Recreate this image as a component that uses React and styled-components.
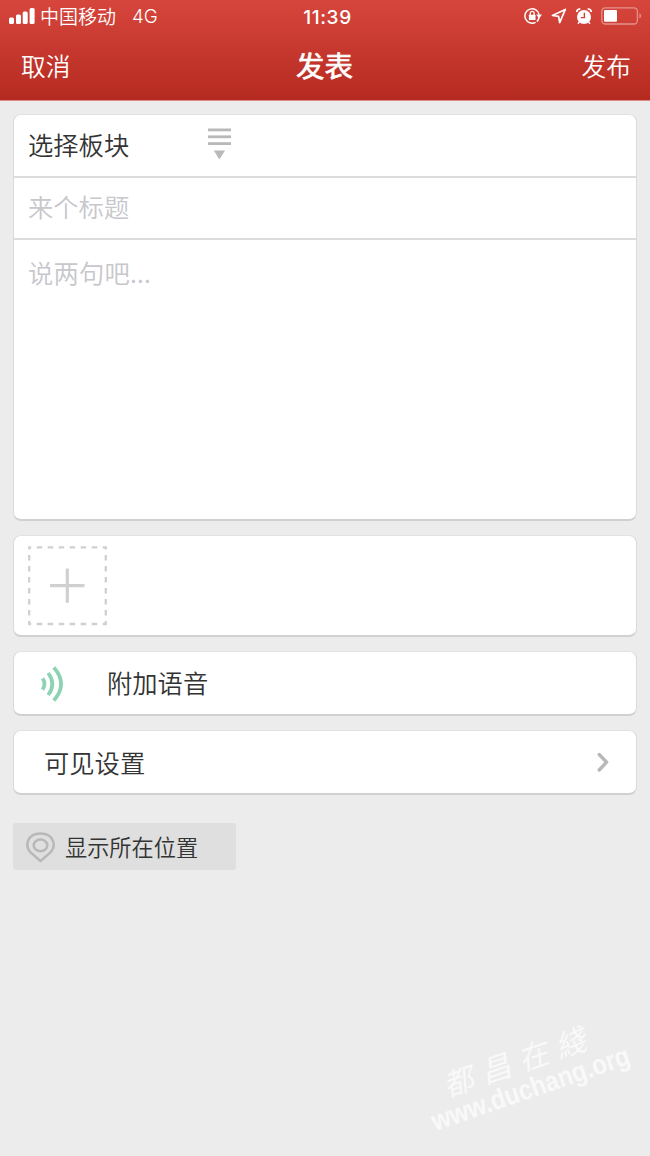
import React from 'react'
import styled, { createGlobalStyle } from 'styled-components'

const App = () => {
    return (
        <Page>
            <GlobalStyle />
            <Header>
                <StatusBar>
                    <Carrier>
                        <SignalIcon />
                        <CarrierName>中国移动</CarrierName>
                        <Network>4G</Network>
                    </Carrier>
                    <Clock>11:39</Clock>
                    <StatusIcons>
                        <RotationLockIcon />
                        <LocationIcon />
                        <AlarmIcon />
                        <BatteryIcon />
                    </StatusIcons>
                </StatusBar>
                <NavBar>
                    <NavButton>取消</NavButton>
                    <NavTitle>发表</NavTitle>
                    <NavButton $right>发布</NavButton>
                </NavBar>
            </Header>

            <Content>
                <Card $height={407}>
                    <BoardRow>
                        <BoardLabel>选择板块</BoardLabel>
                        <DropdownIcon />
                    </BoardRow>
                    <TitleRow>来个标题</TitleRow>
                    <BodyArea>说两句吧...</BodyArea>
                </Card>

                <Card $height={102}>
                    <PhotoArea>
                        <AddPhotoIcon />
                    </PhotoArea>
                </Card>

                <Card $height={65}>
                    <VoiceRow>
                        <SoundIcon />
                        <RowLabel>附加语音</RowLabel>
                    </VoiceRow>
                </Card>

                <Card $height={65}>
                    <SettingRow>
                        <RowLabel>可见设置</RowLabel>
                        <ChevronIcon />
                    </SettingRow>
                </Card>

                <LocationButton>
                    <PinIcon />
                    <LocationText>显示所在位置</LocationText>
                </LocationButton>
            </Content>

            <Watermark>
                <WatermarkName>都昌在綫</WatermarkName>
                <WatermarkUrl>www.duchang.org</WatermarkUrl>
            </Watermark>
        </Page>
    )
}

const SignalIcon = () => (
    <svg width="26" height="18" viewBox="0 0 26 18" fill="#fff">
        <rect x="0" y="10.5" width="5" height="6.5" rx="1.5" />
        <rect x="7" y="7.5" width="5" height="9.5" rx="1.5" />
        <rect x="13.7" y="4.5" width="5" height="12.5" rx="1.5" />
        <rect x="20.6" y="1" width="5" height="16" rx="1.5" />
    </svg>
)

const RotationLockIcon = () => (
    <svg width="18" height="18" viewBox="0 0 18 18">
        <path d="M15.1 9.5 A7.2 7.2 0 0 1 12.8 14.6 M11.6 15.3 A7.2 7.2 0 1 1 15.2 7.6" fill="none" stroke="#fff" strokeWidth="1.5" />
        <path d="M12.1 7.4 H18 L15.1 11.4 Z" fill="#fff" />
        <rect x="4.9" y="7.7" width="6.6" height="5.3" rx="0.5" fill="#fff" />
        <path d="M6.3 8 V6.2 A1.9 1.9 0 0 1 10.1 6.2 V8" fill="none" stroke="#fff" strokeWidth="1.3" />
    </svg>
)

const LocationIcon = () => (
    <svg width="16" height="16" viewBox="0 0 16 16">
        <path d="M14.3 1.4 L1.4 7.5 L7.6 8.4 L8.7 14.6 Z" fill="none" stroke="#fff" strokeWidth="1.7" strokeLinejoin="round" />
    </svg>
)

const AlarmIcon = () => (
    <svg width="16" height="17" viewBox="0 0 16 17">
        <circle cx="8" cy="9" r="7" fill="#fff" />
        <path d="M0.9 4 A2.6 2.6 0 0 1 4.3 1.2 M11.7 1.2 A2.6 2.6 0 0 1 15.1 4" fill="none" stroke="#fff" strokeWidth="1.8" />
        <path d="M3.4 14 L2 15.8 M12.6 14 L14 15.8" stroke="#fff" strokeWidth="1.4" />
        <path d="M8.4 4.8 V9.6 H4.8" fill="none" stroke="#d03e35" strokeWidth="1.4" />
    </svg>
)

const BatteryIcon = () => (
    <svg width="41" height="18" viewBox="0 0 41 18">
        <rect x="0.8" y="0.8" width="35.6" height="16.2" rx="3.5" fill="none" stroke="#e3928c" strokeWidth="1.3" />
        <rect x="3" y="3" width="13" height="11.8" rx="1" fill="#fff" />
        <path d="M38.4 6 A3.2 3.2 0 0 1 38.4 11.6 Z" fill="#e3928c" />
    </svg>
)

const DropdownIcon = () => (
    <svg width="23" height="33" viewBox="0 0 23 33" fill="#b9b9b9">
        <rect x="0" y="1.5" width="23" height="2.8" />
        <rect x="0" y="8.4" width="23" height="2.8" />
        <rect x="0" y="15.2" width="23" height="2.8" />
        <path d="M5.8 23.6 H17 L11.4 32.6 Z" />
    </svg>
)

const AddPhotoIcon = () => (
    <svg width="80" height="80" viewBox="0.5 0.3 80 80" fill="none" stroke="#d0d0d0">
        <path d="M1 1.7 H79 M1 78.3 H79" strokeWidth="2.3" strokeDasharray="5.5 5.5" strokeDashoffset="2.8" />
        <path d="M1.7 1 V79 M78.3 1 V79" strokeWidth="2.3" strokeDasharray="5.5 5.5" strokeDashoffset="2.8" />
        <path d="M22.5 40 H57 M39.8 22.8 V57" strokeWidth="3.2" />
    </svg>
)

const SoundIcon = () => (
    <svg width="24" height="36" viewBox="0 0 24 36" fill="none" stroke="#8bd3b3" strokeWidth="3.7">
        <path d="M2.6 12.4 Q6.4 18 2.6 23.6" />
        <path d="M8.2 7 Q16.4 18 8.2 29" />
        <path d="M13.8 1.6 Q28.4 18 13.8 34.4" />
    </svg>
)

const ChevronIcon = () => (
    <svg width="12" height="20" viewBox="0 0 12 20">
        <path d="M2.2 2.5 L9.6 10.2 L2.2 18" fill="none" stroke="#b8b8b8" strokeWidth="3.4" strokeLinecap="round" strokeLinejoin="round" />
    </svg>
)

const PinIcon = () => (
    <svg width="29" height="31" viewBox="0 0 29 31" fill="none" stroke="#b8b8b8" strokeWidth="2.5">
        <path d="M14.5 29 L4.8 20.6 C-1.8 14 1.2 1.6 14.5 1.6 C27.8 1.6 30.8 14 24.2 20.6 Z" strokeLinejoin="round" />
        <ellipse cx="14.5" cy="13.4" rx="6.8" ry="5.8" />
    </svg>
)

const GlobalStyle = createGlobalStyle`
    * {
        box-sizing: border-box;
    }
    body {
        margin: 0;
        background: #ececec;
    }
    svg {
        display: block;
        flex-shrink: 0;
    }
`

const Page = styled.div`
    position: relative;
    width: 650px;
    height: 1156px;
    overflow: hidden;
    background: #ececec;
    color: #333;
    font-family: "Noto Sans CJK SC", sans-serif;
    font-weight: 350;
`

const Header = styled.header`
    height: 101px;
    color: #fff;
    background: linear-gradient(#d7463d, #b52a20);
    border-bottom: 1px solid #dc8b86;
`

const StatusBar = styled.div`
    display: grid;
    grid-template-columns: 1fr auto 1fr;
    align-items: center;
    height: 31px;
    padding: 0 8px 0 9px;
`

const Carrier = styled.div`
    display: flex;
    align-items: center;
    font-size: 19px;
    line-height: 30px;
`

const CarrierName = styled.span`
    margin-left: 5px;
`

const Network = styled.span`
    padding-top: 2px;
    margin-left: 16px;
    font-family: Inter, sans-serif;
    font-size: 18.8px;
    font-weight: 350;
`

const Clock = styled.span`
    padding: 2px 0 0 4px;
    font-family: Inter, sans-serif;
    font-size: 19px;
    font-weight: 500;
    letter-spacing: 0.6px;
`

const StatusIcons = styled.div`
    display: flex;
    align-items: center;
    justify-content: flex-end;
    gap: 9px;
`

const NavBar = styled.nav`
    display: grid;
    grid-template-columns: 1fr auto 1fr;
    align-items: center;
    height: 68px;
    padding: 0 19px 0 21px;
`

const NavButton = styled.span`
    font-size: 24.7px;
    line-height: 68px;
    text-align: ${props => (props.$right ? 'right' : 'left')};
`

const NavTitle = styled.h1`
    margin: 0;
    padding-right: 3px;
    font-size: 28.5px;
    font-weight: 400;
    line-height: 66px;
    -webkit-text-stroke: 0.6px #fff;
`

const Content = styled.main`
    display: flex;
    flex-direction: column;
    gap: 14px;
    padding: 13px 13px 0;
`

const Card = styled.section`
    height: ${props => props.$height}px;
    background: #fff;
    border: 1px solid #dadada;
    border-top-color: #e2e2e2;
    border-bottom: 2px solid #d0d0d0;
    border-radius: 8px;
    font-size: 25.3px;
`

const BoardRow = styled.div`
    display: flex;
    align-items: center;
    height: 63px;
    padding: 0 0 4px 14px;
    border-bottom: 2px solid #dcdcdc;
`

const BoardLabel = styled.span`
    width: 180px;
`

const TitleRow = styled.div`
    height: 62px;
    padding-left: 14px;
    border-bottom: 2px solid #dcdcdc;
    color: #c7c7cc;
    line-height: 57px;
`

const BodyArea = styled.div`
    padding: 13px 14px;
    color: #c7c7cc;
    line-height: 38px;
    letter-spacing: 0.2px;
`

const PhotoArea = styled.div`
    padding: 10px 14px;
`

const VoiceRow = styled.div`
    display: flex;
    align-items: center;
    gap: 43px;
    height: 100%;
    padding: 2px 0 0 26px;

    span {
        padding-bottom: 4px;
    }
`

const SettingRow = styled.div`
    display: flex;
    align-items: center;
    justify-content: space-between;
    height: 100%;
    padding: 0 27px 0 30px;
`

const RowLabel = styled.span`
    line-height: 58px;
`

const LocationButton = styled.div`
    display: flex;
    align-items: center;
    gap: 10px;
    width: 223px;
    height: 47px;
    margin-top: 14px;
    padding: 2px 0 0 13px;
    border-radius: 3px;
    background: #dfdfdf;
    font-size: 22.2px;
`

const LocationText = styled.span`
    padding-bottom: 4px;
`

/* stamped over the page, tilted upwards */
const Watermark = styled.div`
    position: absolute;
    left: 421px;
    top: 1041px;
    width: 212px;
    color: #f9f9f9;
    transform: rotate(-19deg);
    text-align: center;
    white-space: nowrap;
`

const WatermarkName = styled.div`
    margin-left: -8px;
    font-size: 30px;
    font-weight: 400;
    font-style: italic;
    letter-spacing: 9.5px;
    line-height: 32px;
`

const WatermarkUrl = styled.div`
    font-family: "Liberation Sans", sans-serif;
    font-size: 28px;
    font-weight: 700;
    line-height: 32px;
    transform: translateX(-14.5px) scaleX(0.86);
`

export default App
